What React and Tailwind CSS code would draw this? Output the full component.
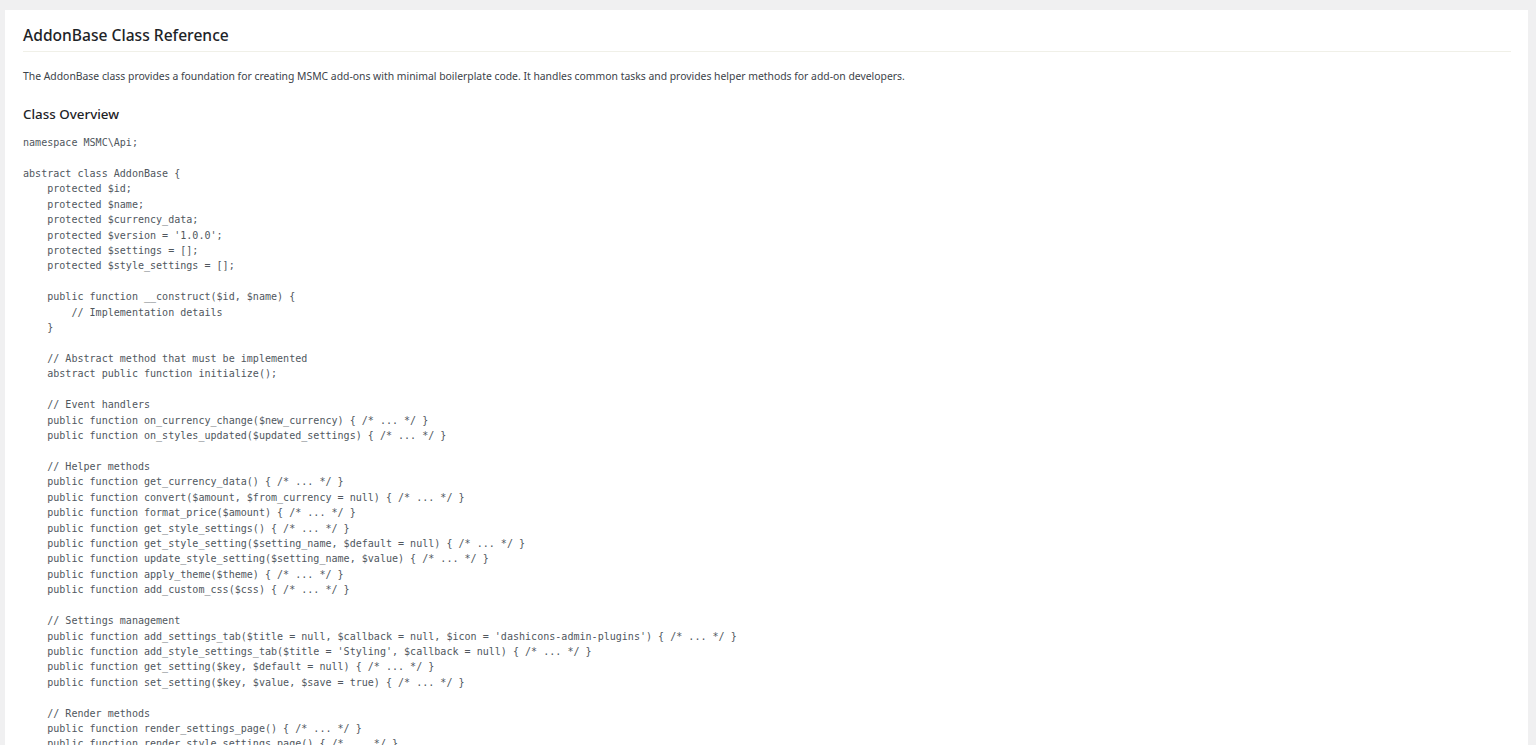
import React from "react";

const code = `namespace MSMC\\Api;

abstract class AddonBase {
    protected $id;
    protected $name;
    protected $currency_data;
    protected $version = '1.0.0';
    protected $settings = [];
    protected $style_settings = [];

    public function __construct($id, $name) {
        // Implementation details
    }

    // Abstract method that must be implemented
    abstract public function initialize();

    // Event handlers
    public function on_currency_change($new_currency) { /* ... */ }
    public function on_styles_updated($updated_settings) { /* ... */ }

    // Helper methods
    public function get_currency_data() { /* ... */ }
    public function convert($amount, $from_currency = null) { /* ... */ }
    public function format_price($amount) { /* ... */ }
    public function get_style_settings() { /* ... */ }
    public function get_style_setting($setting_name, $default = null) { /* ... */ }
    public function update_style_setting($setting_name, $value) { /* ... */ }
    public function apply_theme($theme) { /* ... */ }
    public function add_custom_css($css) { /* ... */ }

    // Settings management
    public function add_settings_tab($title = null, $callback = null, $icon = 'dashicons-admin-plugins') { /* ... */ }
    public function add_style_settings_tab($title = 'Styling', $callback = null) { /* ... */ }
    public function get_setting($key, $default = null) { /* ... */ }
    public function set_setting($key, $value, $save = true) { /* ... */ }

    // Render methods
    public function render_settings_page() { /* ... */ }
    public function render_style_settings_page() { /* ... */ }
}`;

const App = () => {
  return (
    <div className="h-[745px] overflow-hidden bg-[#f0f0f1] pt-[10px] pl-[5px] pr-2 font-['Noto_Sans',sans-serif]">
      <div className="bg-white pl-[18px] pr-[17px] pb-5">
        <h1 className="border-b border-[#f0f0e8] pt-[14px] pb-[5px] text-[15.6px] leading-[22px] font-medium text-[#1d2327]">
          AddonBase Class Reference
        </h1>
        <p className="mt-[14px] text-[10.39px] leading-[20px] text-[#3c434a]">
          The AddonBase class provides a foundation for creating MSMC add-ons with minimal boilerplate code. It handles common tasks and provides helper methods for add-on developers.
        </p>
        <h2 className="mt-[18px] text-[13.4px] leading-[20px] font-medium text-[#1d2327]">
          Class Overview
        </h2>
        <pre className="mt-[11px] font-['DejaVu_Sans_Mono',monospace] text-[10.06px] leading-[15.42px] text-[#50575e]">
          {code}
        </pre>
      </div>
    </div>
  );
};

export default App;
